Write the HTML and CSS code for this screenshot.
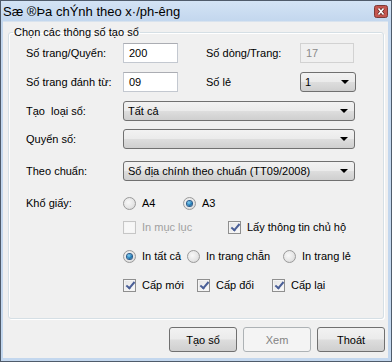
FILE: index.html
```html
<!DOCTYPE html>
<html>
<head>
<meta charset="UTF-8">
<title>Sổ địa chính</title>
<link rel="stylesheet" href="styles.css">
</head>
<body>

<div class="window">
    <div class="titlebar">
        <span class="title">Sæ ®Þa chÝnh theo x·/ph-êng</span>
        <span class="close">
            <svg width="14" height="13" viewBox="0 0 14 13">
                <rect x="0.5" y="0.5" width="13" height="12" rx="2" fill="#c4564f" stroke="#7d3a36"/>
                <path d="M4.5 3.5 L9.5 9.5 M9.5 3.5 L4.5 9.5" stroke="#5a2522" stroke-width="3"/>
                <path d="M4.5 3.5 L9.5 9.5 M9.5 3.5 L4.5 9.5" stroke="#fff" stroke-width="1.6"/>
            </svg>
        </span>
    </div>

    <div class="client">
        <fieldset class="group">
            <legend>Chọn các thông số tạo sổ</legend>

            <div class="row">
                <span class="label">Số trang/Quyển:</span>
                <div class="textbox short">200</div>
                <span class="label label-2">Số dòng/Trang:</span>
                <div class="textbox small disabled">17</div>
            </div>

            <div class="row">
                <span class="label">Số trang đánh từ:</span>
                <div class="textbox short">09</div>
                <span class="label label-2">Số lẻ</span>
                <div class="combo small"><span>1</span><i class="arrow"></i></div>
            </div>

            <div class="row">
                <span class="label">Tạo&nbsp; loại sổ:</span>
                <div class="combo wide"><span>Tất cả</span><i class="arrow"></i></div>
            </div>

            <div class="row row-tight">
                <span class="label">Quyển số:</span>
                <div class="combo wide"><span></span><i class="arrow"></i></div>
            </div>

            <div class="row row-loose">
                <span class="label">Theo chuẩn:</span>
                <div class="combo wide"><span>Sổ địa chính theo chuẩn (TT09/2008)</span><i class="arrow"></i></div>
            </div>

            <div class="row row-loose">
                <span class="label">Khổ giấy:</span>
                <label class="opt w60"><i class="radio"></i>A4</label>
                <label class="opt"><i class="radio on"></i>A3</label>
            </div>

            <div class="row row-close">
                <span class="label"></span>
                <label class="opt w105 off"><i class="check"></i>In mục lục</label>
                <label class="opt"><i class="check on"></i>Lấy thông tin chủ hộ</label>
            </div>

            <div class="row">
                <span class="label"></span>
                <label class="opt w64"><i class="radio on"></i>In tất cả</label>
                <label class="opt w96"><i class="radio"></i>In trang chẵn</label>
                <label class="opt"><i class="radio"></i>In trang lẻ</label>
            </div>

            <div class="row">
                <span class="label"></span>
                <label class="opt w74"><i class="check on"></i>Cấp mới</label>
                <label class="opt w75"><i class="check on"></i>Cấp đổi</label>
                <label class="opt"><i class="check on"></i>Cấp lại</label>
            </div>
        </fieldset>

        <div class="buttons">
            <button class="btn">Tạo sổ</button>
            <button class="btn" disabled>Xem</button>
            <button class="btn">Thoát</button>
        </div>
    </div>
</div>

</body>
</html>
```

FILE: styles.css
```css
body, html {
    margin: 0;
    padding: 0;
    font-family: "Liberation Sans", Arial, sans-serif;
    font-size: 11px;
    color: #000;
}

.window {
    width: 392px;
    height: 362px;
    box-sizing: border-box;
    border: 1px solid #4f5b6b;
    background: #c3d7ee;
    display: flex;
    flex-direction: column;
}

.titlebar {
    height: 20px;
    display: flex;
    align-items: center;
    justify-content: space-between;
    background: linear-gradient(#d3e3f5, #c3d7ee);
    padding: 0 3px 0 2px;
}

.title {
    font-size: 13px;
    color: #000;
}

.close {
    display: flex;
    margin-top: 0;
}

.client {
    flex: 1;
    margin: 0 3px 3px 2px;
    background: #f0f0f0;
    border-top: 1px solid #d9e3ee;
    display: flex;
    flex-direction: column;
}

.group {
    margin: 3px 4px 0 5px;
    padding: 4px 0 23px 17px;
    border: 1px solid #d5dfe5;
    border-radius: 3px;
    box-shadow: 1px 1px 0 #fff, inset 1px 1px 0 #fff;
}

.group legend {
    padding: 0 1px;
    margin-left: -13px;
    line-height: 14px;
    font-size: 11px;
}

.row {
    display: flex;
    align-items: center;
    height: 20px;
    margin-top: 9px;
}

.row:first-of-type {
    margin-top: 0;
}

.row-tight {
    margin-top: 8px;
}

.row-loose {
    margin-top: 12px;
}

.row-close {
    margin-top: 4px;
}

.label {
    width: 97px;
    flex: none;
}

.label-2 {
    width: 94px;
    margin-left: 28px;
}

.textbox {
    box-sizing: border-box;
    height: 20px;
    border: 1px solid #c3c8d0;
    border-top-color: #abadb3;
    background: #fff;
    padding: 3px 0 0 5px;
}

.textbox.short {
    width: 55px;
}

.textbox.small {
    width: 54px;
}

.textbox.disabled {
    background: #f0f0f0;
    color: #8b8b8b;
    border-color: #d2d2d2;
}

.combo {
    box-sizing: border-box;
    height: 20px;
    border: 1px solid #707070;
    border-radius: 3px;
    background: linear-gradient(#f2f2f2 0%, #ebebeb 48%, #dddddd 52%, #cfcfcf 100%);
    display: flex;
    align-items: center;
    justify-content: space-between;
    padding: 0 6px 0 4px;
}

.combo.wide {
    width: 232px;
}

.combo.small {
    width: 56px;
}

.arrow {
    width: 0;
    height: 0;
    border-left: 4px solid transparent;
    border-right: 4px solid transparent;
    border-top: 4px solid #000;
}

.opt {
    display: flex;
    align-items: center;
    gap: 6px;
    flex: none;
}

.w60 { width: 60px; }
.w64 { width: 64px; }
.w74 { width: 74px; }
.w75 { width: 75px; }
.w96 { width: 96px; }
.w105 { width: 105px; }

.opt.off {
    color: #a0a0a0;
}

.radio {
    box-sizing: border-box;
    width: 13px;
    height: 13px;
    border: 1px solid #9a9a9a;
    border-radius: 50%;
    background: radial-gradient(circle at 40% 40%, #f8f8f8 0%, #e6e6e6 55%, #cfcfcf 100%);
    display: flex;
    align-items: center;
    justify-content: center;
}

.radio.on::after {
    content: "";
    width: 5px;
    height: 5px;
    border-radius: 50%;
    background: radial-gradient(circle at 40% 35%, #8ad4f6 0%, #1e7cb8 55%, #0d3f6e 100%);
    box-shadow: 0 0 0 1px #2a5a8a;
}

.check {
    box-sizing: border-box;
    width: 13px;
    height: 13px;
    border: 1px solid #8f8f8f;
    background: linear-gradient(135deg, #e4e4e4, #fbfbfb);
    box-shadow: inset 0 0 0 1px #f4f4f4;
    position: relative;
}

.opt.off .check {
    border-color: #c6c6c6;
    background: #f7f7f7;
}

.check.on::after {
    content: "";
    position: absolute;
    left: 4px;
    top: 0px;
    width: 3px;
    height: 7px;
    border: solid #4a5f97;
    border-width: 0 2px 2px 0;
    transform: rotate(40deg);
}

.buttons {
    display: flex;
    justify-content: flex-end;
    gap: 6px;
    margin: 8px 3px 0 0;
}

.btn {
    width: 68px;
    height: 25px;
    border: 1px solid #707070;
    border-radius: 3px;
    background: linear-gradient(#f2f2f2 0%, #ebebeb 48%, #dddddd 52%, #cfcfcf 100%);
    font-family: "Liberation Sans", Arial, sans-serif;
    font-size: 11px;
    color: #000;
    padding: 0;
}

.btn:disabled {
    border-color: #adb2b5;
    background: #f4f4f4;
    color: #838383;
}
```
